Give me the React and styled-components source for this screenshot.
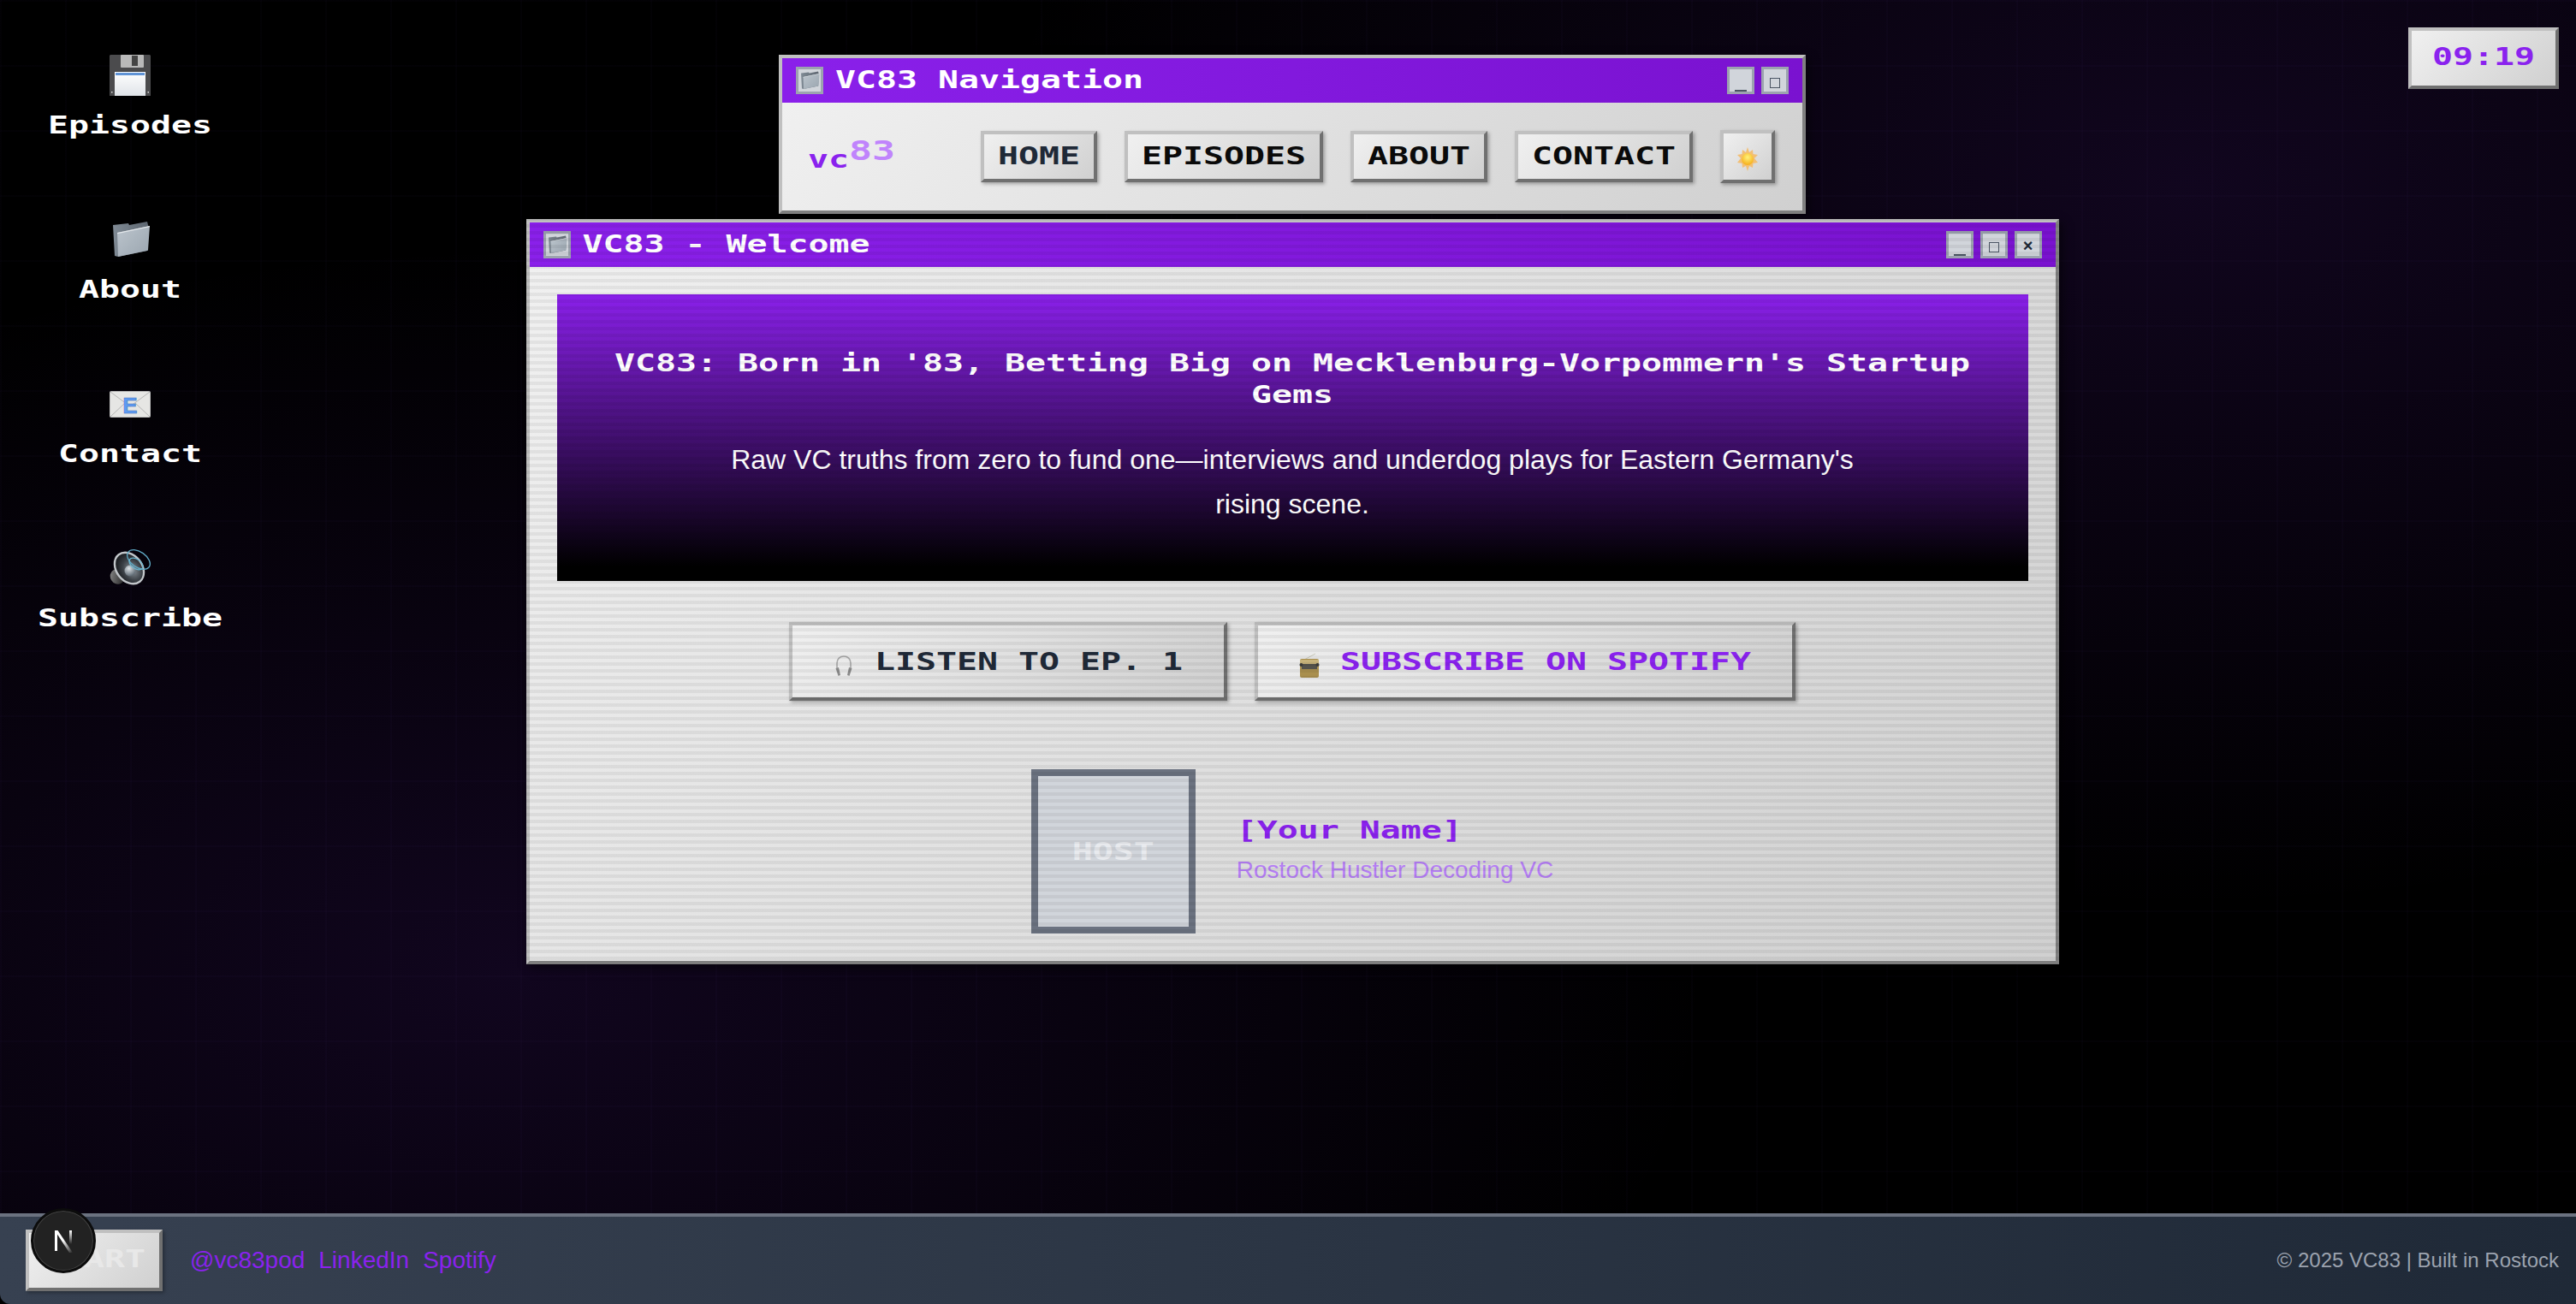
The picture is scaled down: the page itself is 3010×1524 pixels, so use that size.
import React from "react";
import styled, { createGlobalStyle } from "styled-components";

const GlobalStyle = createGlobalStyle`
  html, body { margin: 0; padding: 0; height: 100%; background: #000; }
  body { font-family: "Liberation Sans", Arial, sans-serif; overflow: hidden; }
`;

// the pixel font is not available: a bold mono stretched to 24px square cells
const Pixel = styled.span`
  display: inline-block;
  font-family: "DejaVu Sans Mono", monospace;
  font-weight: 700;
  font-size: ${(p) => (p.$cell || 24) / 0.602}px;
  line-height: ${(p) => p.$line || 24}px;
  white-space: pre;
  transform: scaleY(0.72);
`;

const Bevel = styled.div`
  box-sizing: border-box;
  border-style: solid;
  border-width: 4px;
  border-color: #c0c0c0 #707070 #707070 #c0c0c0;
  background: linear-gradient(135deg, #f0f0f0, #d0d0d0);
`;

const Page = styled.div`
  height: 100vh;
  display: flex;
  flex-direction: column;
  overflow: hidden;
`;

const Desktop = styled.main`
  position: relative;
  flex: 1;
  min-height: 0;
  background:
    linear-gradient(rgba(138, 92, 246, 0.018) 2px, transparent 2px) 0 0 / 76px 76px,
    linear-gradient(90deg, rgba(138, 92, 246, 0.018) 2px, transparent 2px) 0 0 / 76px 76px,
    radial-gradient(ellipse 1400px 850px at 20% 80%, rgba(130, 45, 235, 0.13), transparent 100%),
    radial-gradient(ellipse 1400px 850px at 85% 15%, rgba(130, 45, 235, 0.13), transparent 100%),
    #000;
`;

const IconColumn = styled.nav`
  position: absolute;
  left: 32px;
  top: 64px;
  width: 240px;
  display: flex;
  flex-direction: column;
`;

const DesktopIcon = styled.a`
  height: 192px;
  display: flex;
  flex-direction: column;
  align-items: center;
  color: #fff;
`;

const IconArt = styled.div`
  height: 48px;
  width: 48px;
  display: flex;
  align-items: center;
  justify-content: center;
`;

const IconLabel = styled.div`
  margin-top: 22px;
`;

const Clock = styled(Bevel)`
  position: absolute;
  top: 32px;
  right: 20px;
  width: 176px;
  height: 72px;
  display: flex;
  align-items: center;
  justify-content: center;
  padding-bottom: 5px;
  color: #8a22ee;
`;

const WindowStack = styled.div`
  display: flex;
  flex-direction: column;
  align-items: center;
  gap: 6px;
  padding: 64px 0 0 10px;
`;

const Window = styled.section`
  position: relative;
  box-sizing: border-box;
  width: ${(p) => p.$width}px;
  border-style: solid;
  border-width: 4px;
  border-color: #c0c0c0 #808080 #808080 #c0c0c0;
  box-shadow: 4px 4px 10px rgba(0, 0, 0, 0.5);
  &::after {
    content: "";
    display: ${(p) => (p.$scan ? "block" : "none")};
    position: absolute;
    inset: -4px;
    pointer-events: none;
    background: repeating-linear-gradient(
      180deg,
      rgba(0, 0, 0, 0.055) 0 2px,
      transparent 2px 6px,
      rgba(0, 0, 0, 0.055) 6px 8px
    );
  }
`;

const TitleBar = styled.header`
  height: 52px;
  box-sizing: border-box;
  padding: 0 16px;
  display: flex;
  align-items: center;
  gap: 14px;
  color: #fff;
  background: linear-gradient(90deg, #8a20ea, #7a12d0);
`;

const TitleIcon = styled.div`
  box-sizing: border-box;
  width: 32px;
  height: 32px;
  border: 3px solid #9ca3af;
  background: #d1d5db;
  display: flex;
  align-items: center;
  justify-content: center;
`;

const TitleText = styled.div`
  flex: 1;
  padding-top: 4px;
`;

const WinButtons = styled.div`
  display: flex;
  gap: 8px;
`;

const WinButton = styled.button`
  box-sizing: border-box;
  width: 32px;
  height: 32px;
  padding: 0;
  border: 3px solid #9ca3af;
  background: #d1d5db;
  position: relative;
  display: flex;
  align-items: flex-end;
  justify-content: center;
  color: #374151;
`;

const MinGlyph = styled.span`
  display: block;
  width: 14px;
  height: 2px;
  background: #4b5563;
`;

const MaxGlyph = styled.span`
  display: block;
  box-sizing: border-box;
  width: 12px;
  height: 12px;
  margin-bottom: 4px;
  border: 1.5px solid #4b5563;
`;

const CloseGlyph = styled.span`
  font: 700 20px/24px "Liberation Sans", sans-serif;
  color: #1f2937;
`;

const NavBody = styled.div`
  height: 126px;
  box-sizing: border-box;
  padding: 0 32px;
  display: flex;
  align-items: center;
  justify-content: space-between;
  background: linear-gradient(135deg, #f0f0f0, #d0d0d0);
`;

const Logo = styled.div`
  display: flex;
  align-items: flex-start;
  color: #8a22ee;
  margin: 6px 0 0 -2px;
`;

const LogoSup = styled.div`
  color: #c084fc;
  margin-top: -10px;
`;

const NavLinks = styled.div`
  display: flex;
  align-items: center;
  gap: 32px;
`;

const NavButton = styled(Bevel).attrs({ as: "button" })`
  height: 60px;
  padding: 2px 16px 0;
  color: ${(p) => (p.$active ? "#1f2937" : "#0a0a0a")};
  box-shadow: 2px 2px 4px rgba(0, 0, 0, 0.3);
`;

const SunButton = styled(Bevel).attrs({ as: "button" })`
  width: 64px;
  height: 62px;
  padding: 6px 0 0;
  display: flex;
  align-items: center;
  justify-content: center;
  box-shadow: 2px 2px 4px rgba(0, 0, 0, 0.3);
`;

const MainBody = styled.div`
  height: 811px;
  box-sizing: border-box;
  padding: 32px;
  display: flex;
  flex-direction: column;
  background: linear-gradient(135deg, #f0f0f0, #d0d0d0);
`;

const Hero = styled.div`
  height: 336px;
  box-sizing: border-box;
  padding-top: 62px;
  display: flex;
  flex-direction: column;
  align-items: center;
  color: #fff;
  background: linear-gradient(180deg, #8a20ea, #000 95%);
`;

const HeroLine = styled.div`
  height: 37px;
`;

const HeroText = styled.p`
  margin: 31px 0 0;
  max-width: 1344px;
  text-align: center;
  font-size: 32px;
  line-height: 52px;
`;

const Actions = styled.div`
  margin-top: 48px;
  display: flex;
  justify-content: center;
  gap: 32px;
`;

const ActionButton = styled(Bevel).attrs({ as: "button" })`
  height: 92px;
  padding: 0 48px;
  display: flex;
  align-items: center;
  gap: 24px;
  color: ${(p) => (p.$accent ? "#8a22ee" : "#1f2937")};
  box-shadow: 2px 2px 4px rgba(0, 0, 0, 0.3);
`;

const ActionIcon = styled.span`
  width: 24px;
  display: flex;
  justify-content: center;
  margin-top: 10px;
`;

const ActionLabel = styled.span`
  margin-top: 4px;
`;

const HostRow = styled.div`
  margin-top: 80px;
  display: flex;
  justify-content: center;
  align-items: center;
  gap: 48px;
`;

const HostPhoto = styled.div`
  box-sizing: border-box;
  width: 192px;
  height: 192px;
  border: 8px solid #6b7280;
  background: #d1d5db;
  display: flex;
  align-items: center;
  justify-content: center;
  color: #e8eaee;
`;

const HostName = styled.div`
  color: #8a22ee;
  padding-top: 3px;
  margin-bottom: 11px;
`;

const HostRole = styled.div`
  font-size: 28px;
  line-height: 36px;
  color: #b57ef5;
`;

const Taskbar = styled.footer`
  height: 106px;
  box-sizing: border-box;
  border-top: 4px solid #6b7280;
  border-bottom-left-radius: 12px;
  padding: 0 20px 0 30px;
  display: flex;
  align-items: center;
  gap: 32px;
  background: linear-gradient(90deg, #374151, #1f2937);
`;

const StartButton = styled(Bevel).attrs({ as: "button" })`
  width: 160px;
  height: 72px;
  padding: 0;
  color: #e8e8e8;
  box-shadow: 2px 2px 4px rgba(0, 0, 0, 0.3);
`;

const SocialLinks = styled.div`
  flex: 1;
  display: flex;
  gap: 16px;
`;

const SocialLink = styled.a`
  font-size: 28px;
  color: #8a22ee;
`;

const Copyright = styled.div`
  font-size: 24px;
  color: #9ca3af;
`;

const DevBadge = styled.div`
  position: absolute;
  left: 36px;
  bottom: 36px;
  box-sizing: border-box;
  width: 76px;
  height: 76px;
  border-radius: 50%;
  background: #222;
  border: 3px solid #0c0c0c;
  box-shadow: inset 0 0 0 1px #444;
  display: flex;
  align-items: center;
  justify-content: center;
`;

const Floppy = () => (
  <svg width="48" height="48" viewBox="0 0 48 48">
    <defs>
      <linearGradient id="floppyLabel" x1="0" y1="0" x2="0" y2="1">
        <stop offset="0" stopColor="#ffffff" />
        <stop offset="1" stopColor="#dfe3e8" />
      </linearGradient>
    </defs>
    <path d="M1 0H47L48 1V48H0V1Z" fill="#4b4b4d" />
    <rect x="13" y="0" width="27" height="15" rx="1" fill="#b9b9b9" />
    <rect x="26" y="1" width="7" height="12" fill="#444" />
    <rect x="6" y="20" width="36" height="28" fill="url(#floppyLabel)" />
    <rect x="7" y="21" width="34" height="3" fill="#5f93d6" />
    <rect x="2" y="43" width="1.5" height="1.5" fill="#ddd" />
    <rect x="44.5" y="43" width="1.5" height="1.5" fill="#ddd" />
  </svg>
);

const Folder = ({ size = 48 }) => (
  <svg width={size} height={size} viewBox="0 -3 48 48">
    <defs>
      <linearGradient id="folderFront" x1="0" y1="0" x2="1" y2="1">
        <stop offset="0" stopColor="#bcc5cd" />
        <stop offset="1" stopColor="#9aa5af" />
      </linearGradient>
      <linearGradient id="folderBack" x1="0" y1="0" x2="1" y2="0">
        <stop offset="0" stopColor="#7f8a94" />
        <stop offset="1" stopColor="#5d6670" />
      </linearGradient>
    </defs>
    <path d="M4 4L22 2L23 4L44 0L46 8L44 34L10 41L6 40Z" fill="url(#folderBack)" />
    <path d="M9 13L47 5L45 33Q45 34 44 34L10 41Z" fill="url(#folderFront)" />
    <path d="M9 13L47 5L47 6.2L9.1 14.2Z" fill="#e3e7eb" />
  </svg>
);

const Envelope = () => (
  <svg width="48" height="48" viewBox="0 0 48 48">
    <rect x="0.5" y="9.5" width="47" height="30" rx="1" fill="#e6e6e4" stroke="#bdbdbd" />
    <path d="M1 10L24 27L47 10M1 39L18 23M47 39L30 23" fill="none" stroke="#b5b5b5" />
    <text
      x="24"
      y="35"
      textAnchor="middle"
      fontFamily="Liberation Sans"
      fontWeight="700"
      fontSize="26"
      fill="#5f9bf2"
      stroke="#3d6fb8"
      strokeWidth="0.5"
    >
      E
    </text>
  </svg>
);

const Speaker = () => (
  <svg width="48" height="48" viewBox="0 0 48 48">
    <defs>
      <radialGradient id="cone" cx="0.55" cy="0.6" r="0.6">
        <stop offset="0" stopColor="#8d959c" />
        <stop offset="0.55" stopColor="#3d4248" />
        <stop offset="1" stopColor="#15171a" />
      </radialGradient>
      <radialGradient id="dome" cx="0.4" cy="0.3" r="0.7">
        <stop offset="0" stopColor="#dfe4e8" />
        <stop offset="1" stopColor="#5d6872" />
      </radialGradient>
      <linearGradient id="magnet" x1="0" y1="0" x2="1" y2="1">
        <stop offset="0" stopColor="#8f8f8f" />
        <stop offset="1" stopColor="#191919" />
      </linearGradient>
    </defs>
    <ellipse cx="9" cy="34" rx="8" ry="9" transform="rotate(-30 9 34)" fill="url(#magnet)" />
    <ellipse cx="23" cy="24" rx="15" ry="20" transform="rotate(-38 23 24)" fill="url(#cone)" stroke="#c2c6ca" strokeWidth="2.4" />
    <circle cx="24" cy="27" r="6.5" fill="url(#dome)" />
    <ellipse cx="34" cy="14" rx="15" ry="9" transform="rotate(35 34 14)" fill="none" stroke="#5fa8c4" strokeWidth="1.3" />
    <ellipse cx="31" cy="19" rx="9" ry="5.5" transform="rotate(35 31 19)" fill="none" stroke="#6ab4ce" strokeWidth="1.3" />
  </svg>
);

const Sun = () => (
  <svg width="24" height="28" viewBox="0 0 24 28">
    <defs>
      <radialGradient id="sunCore" cx="0.5" cy="0.35" r="0.7">
        <stop offset="0" stopColor="#fff27a" />
        <stop offset="1" stopColor="#f5a912" />
      </radialGradient>
    </defs>
    <path d="M12 0L14 6L18 3L18.5 8L24 9L20 13L24 18L18.5 19L18 24L14 22L12 28L10 22L6 24L5.5 19L0 18L4 13L0 9L5.5 8L6 3L10 6Z" fill="#f2bf74" />
    <circle cx="12" cy="14" r="7" fill="url(#sunCore)" />
  </svg>
);

const Headphones = () => (
  <svg width="22" height="26" viewBox="0 0 22 26">
    <path d="M3 17V10C3 5 6.5 2 11 2S19 5 19 10V17" fill="none" stroke="#a8a8a8" strokeWidth="1.6" />
    <path d="M1.5 16L5 15L7 24L4.5 25Z" fill="#8a8a8a" />
    <path d="M20.5 16L17 15L15 24L17.5 25Z" fill="#8a8a8a" />
  </svg>
);

const Radio = () => (
  <svg width="24" height="30" viewBox="0 0 24 30">
    <path d="M6 8L19 1" stroke="#c8c8b8" strokeWidth="1" />
    <rect x="1" y="7" width="22" height="22" rx="2" fill="#a98f4e" />
    <rect x="1" y="8" width="22" height="5" fill="#c7b27a" />
    <rect x="3" y="13" width="18" height="6" fill="#54524c" />
    <circle cx="2.5" cy="14" r="2" fill="#3c3c3c" />
    <circle cx="21.5" cy="14" r="2" fill="#3c3c3c" />
  </svg>
);

const NextMark = () => (
  <svg width="30" height="30" viewBox="0 0 30 30">
    <defs>
      <linearGradient id="nextDiag" x1="0" y1="0" x2="1" y2="1">
        <stop offset="0.45" stopColor="#fff" />
        <stop offset="1" stopColor="#fff" stopOpacity="0" />
      </linearGradient>
      <linearGradient id="nextBar" x1="0" y1="0" x2="0" y2="1">
        <stop offset="0" stopColor="#fff" />
        <stop offset="1" stopColor="#fff" stopOpacity="0" />
      </linearGradient>
    </defs>
    <path d="M5 3H8.5L26 29H22Z" fill="url(#nextDiag)" />
    <rect x="5" y="3" width="3" height="24" fill="#fff" />
    <rect x="22" y="3" width="3" height="16" fill="url(#nextBar)" />
  </svg>
);

const desktopIcons = [
  { label: "Episodes", art: <Floppy /> },
  { label: "About", art: <Folder /> },
  { label: "Contact", art: <Envelope /> },
  { label: "Subscribe", art: <Speaker /> },
];

const navLinks = ["HOME", "EPISODES", "ABOUT", "CONTACT"];
const socials = ["@vc83pod", "LinkedIn", "Spotify"];

const App = () => (
  <Page>
    <GlobalStyle />
    <Desktop>
      <IconColumn>
        {desktopIcons.map((icon) => (
          <DesktopIcon key={icon.label}>
            <IconArt>{icon.art}</IconArt>
            <IconLabel>
              <Pixel>{icon.label}</Pixel>
            </IconLabel>
          </DesktopIcon>
        ))}
      </IconColumn>

      <Clock>
        <Pixel>09:19</Pixel>
      </Clock>

      <WindowStack>
        <Window $width={1200}>
          <TitleBar>
            <TitleIcon>
              <Folder size={24} />
            </TitleIcon>
            <TitleText>
              <Pixel>VC83 Navigation</Pixel>
            </TitleText>
            <WinButtons>
              <WinButton><MinGlyph /></WinButton>
              <WinButton><MaxGlyph /></WinButton>
            </WinButtons>
          </TitleBar>
          <NavBody>
            <Logo>
              <Pixel>vc</Pixel>
              <LogoSup>
                <Pixel $cell={27}>83</Pixel>
              </LogoSup>
            </Logo>
            <NavLinks>
              {navLinks.map((link) => (
                <NavButton key={link} $active={link === "HOME"}>
                  <Pixel>{link}</Pixel>
                </NavButton>
              ))}
              <SunButton><Sun /></SunButton>
            </NavLinks>
          </NavBody>
        </Window>

        <Window $width={1791} $scan>
          <TitleBar>
            <TitleIcon>
              <Folder size={24} />
            </TitleIcon>
            <TitleText>
              <Pixel>VC83 - Welcome</Pixel>
            </TitleText>
            <WinButtons>
              <WinButton><MinGlyph /></WinButton>
              <WinButton><MaxGlyph /></WinButton>
              <WinButton><CloseGlyph>×</CloseGlyph></WinButton>
            </WinButtons>
          </TitleBar>
          <MainBody>
            <Hero>
              <HeroLine>
                <Pixel $line={37}>VC83: Born in '83, Betting Big on Mecklenburg-Vorpommern's Startup</Pixel>
              </HeroLine>
              <HeroLine>
                <Pixel $line={37}>Gems</Pixel>
              </HeroLine>
              <HeroText>
                Raw VC truths from zero to fund one—interviews and underdog plays for Eastern Germany's rising scene.
              </HeroText>
            </Hero>
            <Actions>
              <ActionButton>
                <ActionIcon><Headphones /></ActionIcon>
                <ActionLabel><Pixel>LISTEN TO EP. 1</Pixel></ActionLabel>
              </ActionButton>
              <ActionButton $accent>
                <ActionIcon><Radio /></ActionIcon>
                <ActionLabel><Pixel>SUBSCRIBE ON SPOTIFY</Pixel></ActionLabel>
              </ActionButton>
            </Actions>
            <HostRow>
              <HostPhoto>
                <Pixel>HOST</Pixel>
              </HostPhoto>
              <div>
                <HostName><Pixel>[Your Name]</Pixel></HostName>
                <HostRole>Rostock Hustler Decoding VC</HostRole>
              </div>
            </HostRow>
          </MainBody>
        </Window>
      </WindowStack>
    </Desktop>

    <Taskbar>
      <StartButton><Pixel>START</Pixel></StartButton>
      <SocialLinks>
        {socials.map((s) => (
          <SocialLink key={s}>{s}</SocialLink>
        ))}
      </SocialLinks>
      <Copyright>© 2025 VC83 | Built in Rostock</Copyright>
    </Taskbar>

    <DevBadge><NextMark /></DevBadge>
  </Page>
);

export default App;
